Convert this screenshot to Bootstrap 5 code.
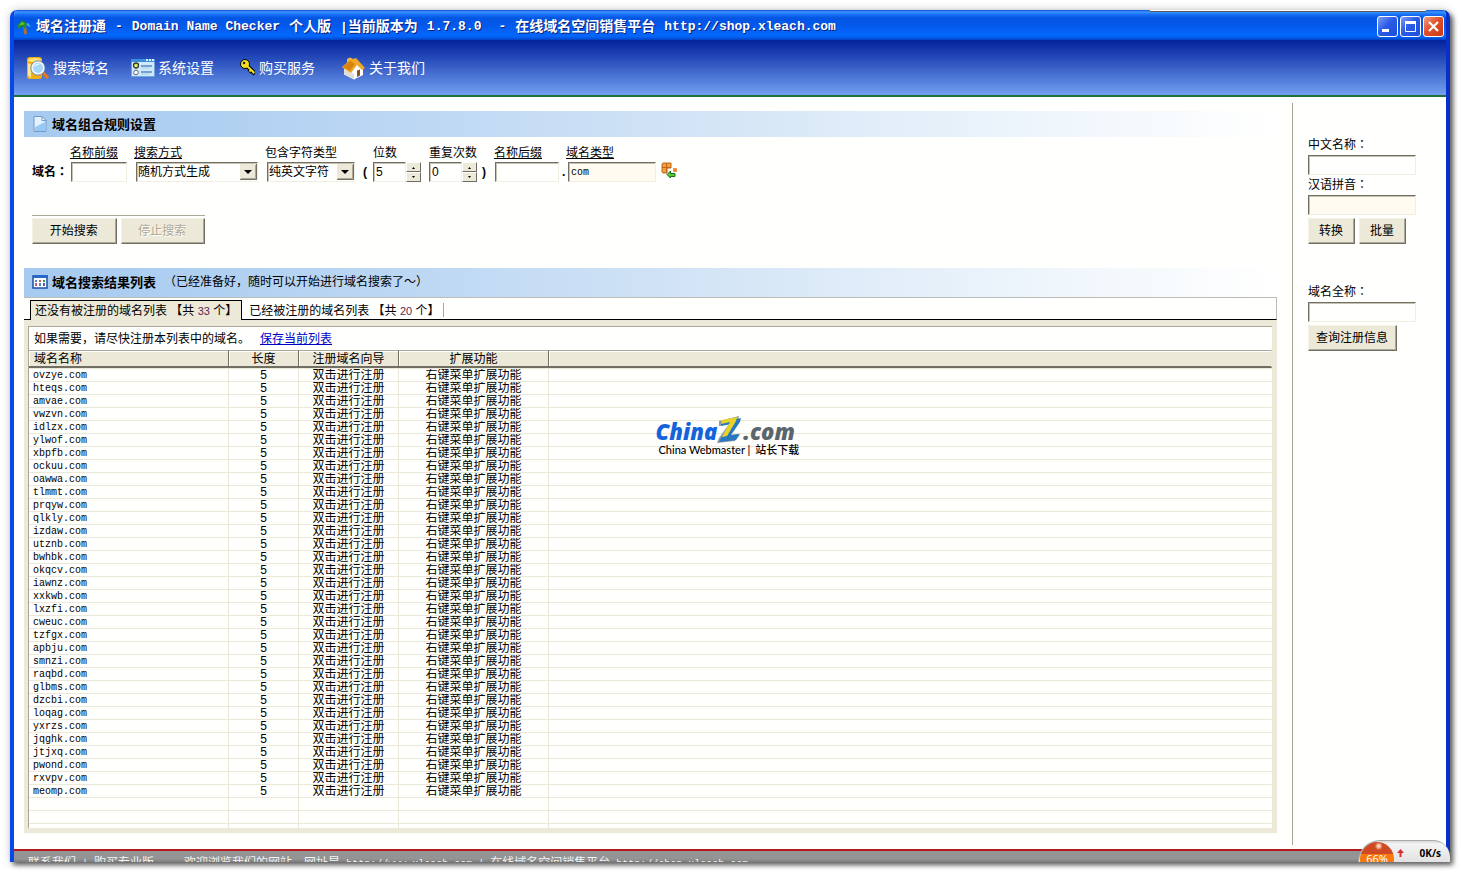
<!DOCTYPE html>
<html lang="zh-CN">
<head>
<meta charset="utf-8">
<meta name="viewport" content="width=device-width, initial-scale=1">
<title>域名注册通 - Domain Name Checker</title>
<link rel="stylesheet" href="https://cdn.jsdelivr.net/npm/bootstrap@5.3.0/dist/css/bootstrap.min.css">
<style>
:root{--face:#ece9d8;--shade:#aca899;--dark:#716f64;--line:#ebe8d8}
body{background:#fff;color:#000;font:12px/14px "Liberation Sans","Noto Sans CJK SC",sans-serif;padding:10px 11px 11px 10px}
.mono{font-family:"Liberation Mono","Noto Sans CJK SC",monospace}
.app-window{border:solid #0a3fe0;border-width:0 4px;border-left-color:#0748e8;border-right-color:#0830c8;border-radius:7px 7px 0 0;overflow:hidden;background:#fffffe}
.app-shadow{border-radius:7px 7px 0 0;box-shadow:3px 3px 5px rgba(0,0,0,.6),0 0 10px rgba(0,0,0,.2)}
.title-bar{height:30px;margin:0 -4px;padding:3px 6px 0 7px;background:linear-gradient(#0a4fd8 0,#3f96ff 2px,#1b74f8 4px,#0355e2 8px,#0458ea 15px,#0466fc 24px,#0263f5 27px,#0340c0 30px)}
.title-bar h1{font:bold 14px/20px "Liberation Mono","Noto Sans CJK SC",monospace;color:#fff;text-shadow:1px 1px #0a1e7a;gap:9px;margin-left:5px;padding-top:2px}
.title-bar h1 .en{font-size:13px}
.sys-group{gap:2px}
.top-strip{top:0;right:24px;width:276px;height:2px;background:#fff;border-bottom:1px solid #555}
.sys-btn{width:21px;height:21px;padding:0;border:1px solid #fff;border-radius:3px;background:linear-gradient(135deg,#7d9ff5,#2b5be8 45%,#1c4ed8);line-height:0}
.sys-close{background:linear-gradient(135deg,#f0a088,#e0502c 45%,#c83a14)}
.tool-bar{height:57px;padding:0 12px;gap:22px;background:linear-gradient(#04229c,#1c40b2 25%,#72a0f0 100%);border-bottom:2px solid #1c7038}
.tool-bar a{color:#fff;font-size:14px;line-height:20px;gap:3px;text-decoration:none}
.work-area{padding:6px 0 4px 10px;gap:15px}
.main-pane{min-width:0;padding:8px 0 12px}
.section-bar{height:26px;padding-left:8px;gap:4px;background:linear-gradient(90deg,#a6caf0,#bad6f3 28%,#d4e5f6 55%,#eff6fc 82%,#fffffe)}
.section-bar h2{font:bold 13px/16px "Noto Sans CJK SC",sans-serif}
.section-tall{height:29px;padding-bottom:2px}
.rule-grid{display:grid;grid-template-columns:38px 64px 131px 98px 9px 56px 54px 12px 68px 4px 95px 20px;grid-template-rows:14px 20px;row-gap:2px;margin:9px 0 0 8px}
.rule-grid label{white-space:nowrap}
.colon{font-family:"Noto Sans CJK TC",sans-serif;line-height:10px}
.inset-1{margin-left:1px}.inset-2{margin-left:2px}
.xp-box.form-control,.xp-box.form-select{height:20px;min-height:0;padding:0 2px;border:1px solid;border-color:var(--dark) #f1efe2 #f1efe2 var(--dark);border-radius:0;font-size:12px;line-height:16px;color:#000;background-color:#fffffe;box-shadow:inset 1px 1px #c6c3b4}
.xp-box.form-control.cream{background-color:#fffbf0}
.xp-box.form-control.tiny{font-size:10px}
.xp-box.form-select{padding-left:1px;background:#fffffe url("data:image/svg+xml,%3Csvg xmlns='http://www.w3.org/2000/svg' width='17' height='16'%3E%3Cpath fill='%23ece9d8' d='M0 0h17v16H0z'/%3E%3Cpath fill='none' stroke='%23716f64' d='M0 15.500h16.500V0'/%3E%3Cpath fill='none' stroke='%23aca899' d='M1 14.500h14.500V1'/%3E%3Cpath d='M4 6h8l-4 4z'/%3E%3C/svg%3E") no-repeat right 0 top 1px}
.w-33{width:33px}.w-56{width:56px}.w-64{width:64px}.w-88{width:88px}.w-122{width:122px}.w-side{width:108px}
.spin button{display:block;width:15px;height:10px;padding:0;border:1px solid;border-color:#fff var(--dark) var(--dark) #fff;background:var(--face);line-height:0}
.spin svg{display:block;margin:auto}
.xp-btn.btn{height:26px;padding:0 8px 1px 7px;border:1px solid;border-color:#f4f2e6 var(--dark) var(--dark) #f4f2e6;border-radius:0;background:var(--face);color:#000;font-size:12px;line-height:16px;box-shadow:inset -1px -1px var(--shade)}
.xp-btn.btn:disabled{color:var(--shade);text-shadow:1px 1px #fff;opacity:1}
.run-row{margin:33px 0 0 8px;padding-top:2px;width:173px;border-top:1px solid var(--shade);gap:4px}
.run-row .btn{flex:1}
.tab-strip{height:23px;padding-left:6px;border:solid;border-width:1px 1px 1px 0;border-color:#bdbdb8 #bdbdb8 #000 #bdbdb8}
.tab-strip button{border:0;background:none;padding:2px 3px 0 7px;white-space:nowrap;height:20px;margin-top:2px;color:#000}
.tab-strip .active{padding:1px 4px 0 4px;border:1px solid #000;border-bottom:0;background:var(--face);margin-bottom:-1px}
.tab-strip .tab-end{width:1px;height:14px;background:var(--shade);margin-top:5px}
.tab-num{color:#5a2a50;font-size:11px}
.tab-pane-box{background:var(--face);padding:6px 5px 5px 4px}
.list-box{background:#fffffe;border-top:1px solid var(--shade);border-left:1px solid var(--shade)}
.list-note{height:23px;padding-left:5px;gap:10px}
.list-note a{color:#0000c8}
.result-grid{width:100%;table-layout:fixed;border-collapse:separate;border-spacing:0}
.col-name{width:200px}.col-len{width:70px}.col-guide{width:100px}.col-more{width:150px}
.result-grid th{height:18px;padding:0;font-weight:400;line-height:14px;text-align:center;background:var(--face);border:solid;border-width:1px 1px 2px 0;border-color:var(--shade) var(--dark) var(--dark);box-shadow:inset 1px 1px #fff}
.result-grid td{height:13px;padding:0;line-height:12px;text-align:center;border:solid var(--line);border-width:0 1px 1px 0;overflow:hidden;white-space:nowrap}
.result-grid tr>:first-child{text-align:left;padding-left:4px}
.result-grid th:first-child{padding-left:5px}
.result-grid tbody td:first-child{font-family:"Liberation Mono",monospace;font-size:10px;line-height:10px;padding-top:2px}
.result-grid tr>:last-child{border-right-color:transparent}
.result-grid tbody tr:first-child td{border-top-width:1px;height:14px}
.result-grid .list-end td{height:4px;border-bottom:0}
.brand-mark{left:50%;top:88px;width:150px;margin-left:5px}
.brand-mark .brand-big{font:italic 800 22px/24px "Open Sans",sans-serif;color:#1463dc;height:28px}
.brand-mark .grey{color:#5b666c}
.brand-mark .brand-sub{font:500 11px/14px Lato,"Noto Sans CJK SC",sans-serif;white-space:nowrap;margin-left:3px;gap:5px}
.side-pane{width:154px;border-left:1px solid #aaa794;padding:35px 0 0 15px}
.side-pane label{display:block;height:14px;margin-bottom:3px}
.side-pane .next-label{margin-top:3px}
.side-pane .group-label{margin-top:41px}
.side-pane .btn-line{margin-top:3px}
.side-pane .short{width:47px}
.status-bar{height:13px;border-top:2px solid #b01c1c;background:linear-gradient(#949494 8px,#7c7c7c);color:#f4f4f4;padding:4px 14px 0;overflow:hidden;white-space:pre;font:10px/14px "Liberation Mono",monospace}
.status-bar span{font:12px/14px "Noto Sans CJK SC",sans-serif}
.status-bar a{color:inherit;text-decoration:none}
.net-meter{right:0;bottom:0;width:92px;height:22px;overflow:hidden;border:solid #a9a9a9;border-width:1px 0 0 1px;border-radius:26px 20px 0 0;background:linear-gradient(#d8d8d8,#f4f4f4 3px,#e2e2e4)}
.net-meter .ball{left:1px;top:1px;width:34px;height:34px;border-radius:50%;background:radial-gradient(circle at 55% 12%,#ffd8c0 0 1px,transparent 4px),linear-gradient(#cf4a22 0 12px,#f8780c 12px);color:#fff;text-align:center;padding-top:10px;font:11px/14px "Noto Sans",sans-serif}
.net-meter .rate{right:9px;top:6px;font:bold 10px/12px "Open Sans",sans-serif}
.net-meter svg{left:38px;top:8px}
</style>
</head>
<body>
<div class="app-shadow position-relative">
<div class="app-window">
  <header class="title-bar d-flex align-items-center">
    <svg width="14" height="16" viewBox="0 0 14 16" aria-hidden="true"><path d="M8 5l3-1 3 4-3-1z" fill="#37b4e8"/><path d="M6 6h3l1 9H7z" fill="#a8742c"/><path d="M0 7l4-5h3l3 3-2 5-3-3-3 3z" fill="#238a28"/><path d="M2 6l3-3 3 2-3 1z" fill="#62c43c"/></svg>
    <h1 class="d-flex mb-0 flex-grow-1 text-nowrap overflow-hidden"><span>域名注册通</span><span class="en">-</span><span class="en">Domain Name Checker</span><span>个人版</span><span><span class="en">|</span>当前版本为</span><span class="en">1.7.8.0</span><span class="en ms-2">-</span><span>在线域名空间销售平台</span><span class="en">http://shop.xleach.com</span></h1>
    <div class="sys-group d-flex">
      <button class="sys-btn" aria-label="最小化"><svg width="19" height="19"><path d="M4 12h7v3H4z" fill="#fff"/></svg></button>
      <button class="sys-btn" aria-label="最大化"><svg width="19" height="19"><path d="M4.500 5.500h10v9h-10z" fill="none" stroke="#fff"/><path d="M4 4h11v3H4z" fill="#fff"/></svg></button>
      <button class="sys-btn sys-close" aria-label="关闭"><svg width="19" height="19"><path d="M5 5l9 9M14 5l-9 9" stroke="#fff" stroke-width="2.200"/></svg></button>
    </div>
  </header>

  <nav class="tool-bar d-flex align-items-center">
    <a href="#search" class="d-flex align-items-center"><svg width="24" height="24" viewBox="0 0 24 24"><path d="M1 4q0-3 3-3h9q3 0 3 3v16q0 3-3 3H4q-3 0-3-3z" fill="#f0b014"/><path d="M2 4q0-2 6.500-2T15 4t-6.500 2T2 4z" fill="#ffe478"/><path d="M2 7v12q1 3 3 3V8q-2 0-3-1z" fill="#ffe890"/><path d="M17 17l5 5" stroke="#e07820" stroke-width="3.200"/><circle cx="12" cy="12" r="6" fill="#a8d8f8" stroke="#f0f6fc" stroke-width="2"/><circle cx="12" cy="12" r="7.200" fill="none" stroke="#5878a8" stroke-width=".8"/><path d="M8 11q2-4 6-3-4 1-6 3z" fill="#fff"/></svg>搜索域名</a>
    <a href="#settings" class="d-flex align-items-center"><svg width="24" height="20" viewBox="0 0 24 20"><path d="M.5 2.500h23v16H.5z" fill="#cfe8fa" stroke="#6aa8dc"/><path d="M0 1h24v3H0z" fill="#3c8ed8"/><path d="M15 1h2v2h-2zM18 1h2v2h-2zM21 1h2v2h-2z" fill="#d8efff"/><circle cx="5" cy="7.500" r="2.500" fill="#dce870" stroke="#30402c" stroke-width="1.300"/><circle cx="5" cy="14.500" r="2.300" fill="#fff" stroke="#58687c"/><path d="M10 8h11M10 14h11" stroke="#1c5ca4"/><path d="M10 10h9M10 16h9" stroke="#a8d0ec"/></svg>系统设置</a>
    <a href="#buy" class="d-flex align-items-center ms-1"><svg width="16" height="17" viewBox="0 0 16 17"><path d="M7 7l7 6.500M11 11l-2 2M14 13l-2 2" stroke="#000" stroke-width="4"/><circle cx="5" cy="5" r="4.500" fill="#f0e020" stroke="#000"/><path d="M7 7l7 6.500M11 11l-1.500 1.500M14 13l-1 1.500" stroke="#f0e020" stroke-width="2"/><circle cx="4" cy="4" r="1.300" fill="#222"/></svg>购买服务</a>
    <a href="#about" class="d-flex align-items-center ms-1"><svg width="25" height="24" viewBox="0 0 25 24"><path d="M3 13l5-2 4-6 10 7v7l-9 4.500-10-5z" fill="#fff"/><path d="M3 13l10 5v5.500L3 18z" fill="#e0dcd8"/><path d="M6 3l3-1.500L12 3v5H6z" fill="#f4b848"/><path d="M1 11l8-7 6-2 9 10-3 2-5-5-6 8-8-5z" fill="#f0a828"/><path d="M2 11l7-6.500 5 3.500-5 7z" fill="#d88410"/><path d="M16 14.500l3-1v6L16 21z" fill="#8a5020"/></svg>关于我们</a>
  </nav>

  <main class="work-area d-flex">
    <div class="main-pane flex-grow-1">
      <section>
        <div class="section-bar d-flex align-items-center">
          <svg width="16" height="18" viewBox="0 0 16 18"><path d="M2 1.500h8l4 4v11H2z" fill="#e4f2ff" stroke="#7098c8"/><path d="M3 12l10-5v9H3z" fill="#98c8f4"/><path d="M10 1.500v4h4z" fill="#fff" stroke="#7098c8"/></svg>
          <h2 class="mb-0">域名组合规则设置</h2>
        </div>
        <form class="rule-grid">
          <span></span><label class="text-decoration-underline" for="pre">名称前缀</label><label class="text-decoration-underline" for="mode">搜索方式</label><label for="kind">包含字符类型</label><span></span><label class="inset-1" for="len">位数</label><label class="inset-1" for="rep">重复次数</label><span></span><label class="text-decoration-underline" for="suf">名称后缀</label><span></span><label class="text-decoration-underline" for="tld">域名类型</label><span></span>
          <b class="align-self-center text-nowrap">域名<span class="colon" lang="zh-TW">：</span></b>
          <input id="pre" class="form-control xp-box w-56 inset-1" type="text">
          <select id="mode" class="form-select xp-box w-122 inset-2"><option>随机方式生成</option></select>
          <select id="kind" class="form-select xp-box w-88 inset-2"><option>纯英文字符</option></select>
          <b class="align-self-center">(</b>
          <div class="d-flex inset-1"><input id="len" class="form-control xp-box w-33" type="text" value="5"><div class="spin"><button type="button" aria-label="增加位数"><svg width="5" height="3"><path d="M1 3h3L2.500 1z"/></svg></button><button type="button" aria-label="减少位数"><svg width="5" height="3"><path d="M1 0h3L2.500 2z"/></svg></button></div></div>
          <div class="d-flex inset-1"><input id="rep" class="form-control xp-box w-33" type="text" value="0"><div class="spin"><button type="button" aria-label="增加重复次数"><svg width="5" height="3"><path d="M1 3h3L2.500 1z"/></svg></button><button type="button" aria-label="减少重复次数"><svg width="5" height="3"><path d="M1 0h3L2.500 2z"/></svg></button></div></div>
          <b class="align-self-center">)</b>
          <input id="suf" class="form-control xp-box w-64 inset-1" type="text">
          <b class="align-self-center">.</b>
          <input id="tld" class="form-control xp-box cream tiny mono w-88 inset-2" type="text" value="com">
          <a href="#types" aria-label="选择域名类型"><svg width="17" height="17" viewBox="0 0 17 17"><path d="M1 2l1-1h8v5H6v5H2l-1-1z" fill="#f4a040" stroke="#c0641a"/><path d="M5.500 1v10M1 5.500h9" stroke="#c06418"/><path d="M12.500 6.500h3v3h-3z" fill="#f0842c" stroke="#f09048"/><path d="M6 12.500L9.500 9v2.500H14v3H9.500V16z" fill="#58c838" stroke="#14701c"/></svg></a>
        </form>
        <div class="run-row d-flex"><button type="button" class="btn xp-btn">开始搜索</button><button type="button" class="btn xp-btn" disabled>停止搜索</button></div>
      </section>

      <section class="mt-4">
        <div class="section-bar section-tall d-flex align-items-center">
          <svg width="16" height="14" viewBox="0 0 16 14"><path d="M1 1h14v12H1z" fill="#fff" stroke="#1c50a8" stroke-width="1.500"/><path d="M1 0h15v3H1z" fill="#2868c8"/><path d="M3 5h2v2H3zM7 8h2v3H7z" fill="#6080c0"/><path d="M7 5h2v2H7zM3 8h2v3H3z" fill="#b06878"/><path d="M11 5h2v2h-2z" fill="#309850"/><path d="M11 8h2v3h-2z" fill="#5060a0"/></svg>
          <h2 class="mb-0">域名搜索结果列表</h2><span class="ms-1">（已经准备好，随时可以开始进行域名搜索了～）</span>
        </div>
        <div class="tab-strip d-flex" role="tablist">
          <button type="button" class="active" role="tab" aria-selected="true">还没有被注册的域名列表 【共 <span class="tab-num">33</span> 个】</button>
          <button type="button" role="tab" aria-selected="false">已经被注册的域名列表 【共 <span class="tab-num">20</span> 个】</button>
          <span class="tab-end"></span>
        </div>
        <div class="tab-pane-box">
          <div class="list-box position-relative">
            <div class="list-note d-flex align-items-center"><span>如果需要，请尽快注册本列表中的域名。</span><a href="#save">保存当前列表</a></div>
            <table class="result-grid">
              <colgroup><col class="col-name"><col class="col-len"><col class="col-guide"><col class="col-more"><col></colgroup>
              <thead><tr><th>域名名称</th><th>长度</th><th>注册域名向导</th><th>扩展功能</th><th></th></tr></thead>
              <tbody id="rows"></tbody>
            </table>
            <div class="brand-mark position-absolute">
              <div class="brand-big d-flex align-items-end"><span>China</span><svg width="26" height="28" viewBox="0 0 26 28"><path d="M2 6L22 1l-1 4L12 20l10-1-4 7-18 2 2-5L12 9 2 11z" fill="#8a9aa4"/><path d="M4 8l20-5-1 4-9 13 9-1-4 6-17 2 2-4L15 9 4 11z" fill="#2878c0"/><path d="M5 5l15-3-1 4-9 15-5 1 8-15-9 2z" fill="#e8d428"/></svg><span class="grey">.com</span></div>
              <div class="brand-sub d-flex"><span>China Webmaster |</span><span>站长下载</span></div>
            </div>
          </div>
        </div>
      </section>
    </div>

    <aside class="side-pane flex-shrink-0">
      <label for="cn">中文名称<span class="colon" lang="zh-TW">：</span></label>
      <input id="cn" class="form-control xp-box w-side" type="text">
      <label class="next-label" for="py">汉语拼音<span class="colon" lang="zh-TW">：</span></label>
      <input id="py" class="form-control xp-box cream w-side" type="text">
      <div class="btn-line d-flex gap-1"><button type="button" class="btn xp-btn short">转换</button><button type="button" class="btn xp-btn short">批量</button></div>
      <label class="group-label" for="full">域名全称<span class="colon" lang="zh-TW">：</span></label>
      <input id="full" class="form-control xp-box w-side" type="text">
      <div class="btn-line"><button type="button" class="btn xp-btn">查询注册信息</button></div>
    </aside>
  </main>
  <footer class="status-bar"><span>联系我们</span> | <span>购买专业版</span>     <span>欢迎浏览我们的网站</span>  <span>网址是</span> <a href="#www">http://www.xleach.com</a> | <span>在线域名空间销售平台</span> <a href="#shop">http://shop.xleach.com</a></footer>
</div>
<div class="top-strip position-absolute"></div>
<div class="net-meter position-absolute"><div class="ball position-absolute">66%</div><svg class="position-absolute" width="7" height="8"><path d="M3.500 0L7 4H4.500v4h-2V4H0z" fill="#d83030"/></svg><span class="rate position-absolute">0K/s</span></div>
</div>
<script>
const names='ovzye hteqs amvae vwzvn idlzx ylwof xbpfb ockuu oawwa tlmmt prqyw qlkly izdaw utznb bwhbk okqcv iawnz xxkwb lxzfi cweuc tzfgx apbju smnzi raqbd glbms dzcbi loqag yxrzs jqghk jtjxq pwond rxvpv meomp'.split(' ');
const row=(c,cls='')=>`<tr class="${cls}">${c.map(t=>`<td>${t}</td>`).join('')}</tr>`;
const blank=['','','','',''];
document.getElementById('rows').innerHTML=names.map(n=>row([n+'.com','5','双击进行注册','右键菜单扩展功能',''])).join('')+row(blank)+row(blank)+row(blank,'list-end');
</script>
<script src="https://cdn.jsdelivr.net/npm/bootstrap@5.3.0/dist/js/bootstrap.bundle.min.js"></script>
</body>
</html>
